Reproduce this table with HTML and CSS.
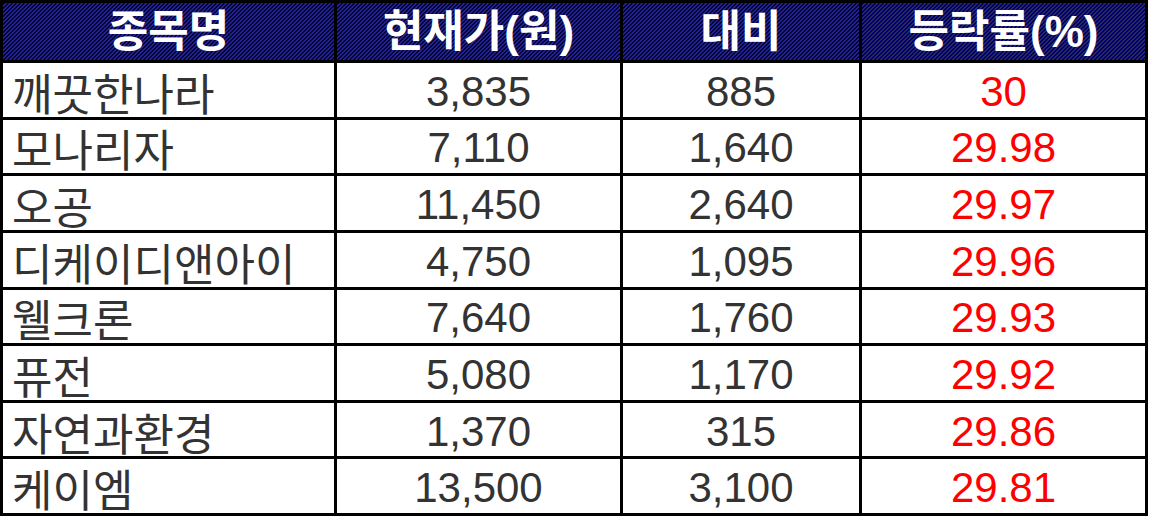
FILE: index.html
```html
<!DOCTYPE html>
<html lang="ko">
<head>
<meta charset="utf-8">
<link rel="stylesheet" href="styles.css">
<title>종목</title>
</head>
<body>
<div class="table">
  <div class="cell head">종목명</div>
  <div class="cell head">현재가(원)</div>
  <div class="cell head">대비</div>
  <div class="cell head">등락률(%)</div>

  <div class="cell name">깨끗한나라</div><div class="cell num">3,835</div><div class="cell num">885</div><div class="cell num red">30</div>
  <div class="cell name">모나리자</div><div class="cell num">7,110</div><div class="cell num">1,640</div><div class="cell num red">29.98</div>
  <div class="cell name">오공</div><div class="cell num">11,450</div><div class="cell num">2,640</div><div class="cell num red">29.97</div>
  <div class="cell name">디케이디앤아이</div><div class="cell num">4,750</div><div class="cell num">1,095</div><div class="cell num red">29.96</div>
  <div class="cell name">웰크론</div><div class="cell num">7,640</div><div class="cell num">1,760</div><div class="cell num red">29.93</div>
  <div class="cell name">퓨전</div><div class="cell num">5,080</div><div class="cell num">1,170</div><div class="cell num red">29.92</div>
  <div class="cell name">자연과환경</div><div class="cell num">1,370</div><div class="cell num">315</div><div class="cell num red">29.86</div>
  <div class="cell name">케이엠</div><div class="cell num">13,500</div><div class="cell num">3,100</div><div class="cell num red">29.81</div>
</div>
</body>
</html>
```
FILE: styles.css
```css
html, body {
  margin: 0;
  padding: 0;
  background: #ffffff;
}

.table {
  box-sizing: border-box;
  width: 1148px;
  height: 516px;
  padding: 3px;
  background: #000000;
  display: grid;
  grid-template-columns: 331px 283px 236px 283px;
  grid-template-rows: 57px repeat(8, 1fr);
  gap: 3px;
}

.cell {
  background: #ffffff;
  display: flex;
  align-items: center;
  white-space: nowrap;
  min-height: 0;
}

.head {
  justify-content: center;
  color: #ffffff;
  font-family: "Liberation Sans", "Noto Sans CJK KR", sans-serif;
  font-weight: 700;
  font-size: 44px;
  line-height: 50px;
  background: repeating-linear-gradient(135deg, #060634 0 1.5px, #222294 1.5px 2.83px);
}

.name {
  justify-content: flex-start;
  padding: 4px 0 0 9px;
  color: #333333;
  font-family: "Noto Sans CJK KR", sans-serif;
  font-weight: 400;
  font-size: 44px;
  line-height: 44px;
}

.num {
  justify-content: center;
  padding-top: 4px;
  color: #333333;
  font-family: "Liberation Sans", Arial, sans-serif;
  font-size: 42px;
  line-height: 44px;
}

.red {
  color: #ff0000;
}
```
